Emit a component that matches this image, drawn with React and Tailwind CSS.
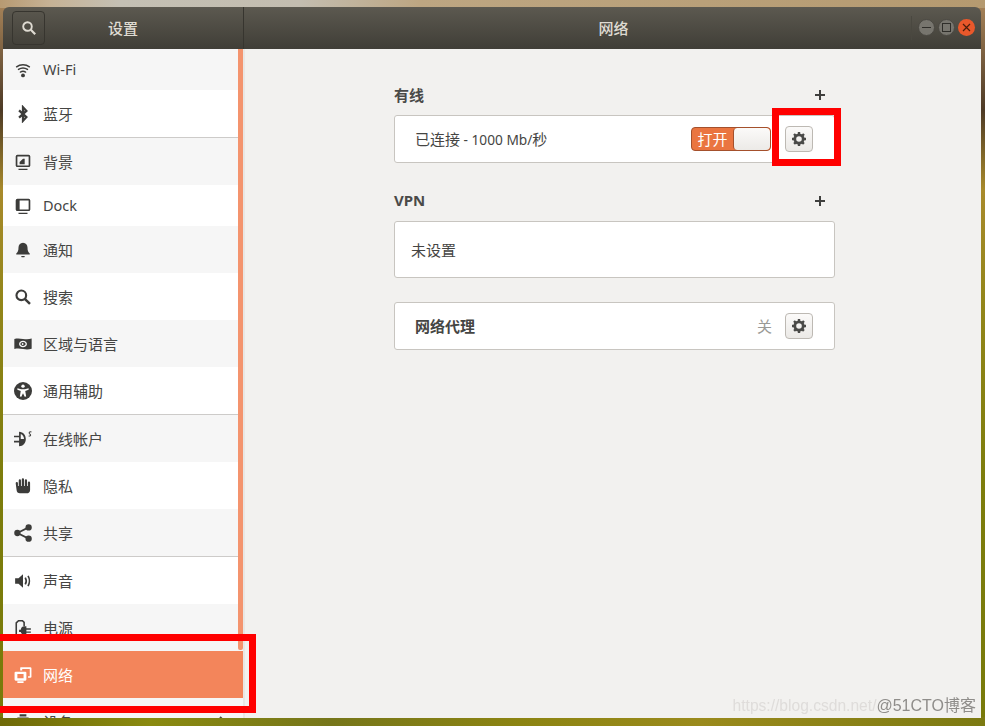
import React from "react";

const I = ({ children, fill = "currentColor" }) => (
  <svg width="18" height="18" viewBox="0 0 16 16" fill={fill} className="shrink-0">{children}</svg>
);

const icons = {
  wifi: (
    <I fill="none">
      <g stroke="currentColor" strokeWidth="1.300" strokeLinecap="round">
        <path d="M2.300 5.200C5.500 2.800 10.500 2.800 13.700 5.200" />
        <path d="M4 7.500C6.400 5.900 9.600 5.900 12 7.500" />
        <path d="M5.700 9.800C7 9 9 9 10.300 9.800" />
      </g>
      <circle cx="8" cy="12.800" r="1.700" fill="currentColor" />
    </I>
  ),
  bt: (
    <I fill="none">
      <path d="M4.500 4.800 11 10.800 8 14V2l3 3.200-6.500 6" stroke="currentColor" strokeWidth="2" />
    </I>
  ),
  bg: (
    <I>
      <path fillRule="evenodd" d="M3 1.500h10A1.500 1.500 0 0 1 14.500 3v8a1.500 1.500 0 0 1-1.500 1.500H3A1.500 1.500 0 0 1 1.500 11V3A1.500 1.500 0 0 1 3 1.500ZM3 3v8h10V3ZM4 14h8v1.200H4Z" />
      <path d="M5 10V8l3-3h1.500v5Z" />
    </I>
  ),
  dock: (
    <I>
      <path fillRule="evenodd" d="M3 1.500h10A1.500 1.500 0 0 1 14.500 3v8a1.500 1.500 0 0 1-1.500 1.500H3A1.500 1.500 0 0 1 1.500 11V3A1.500 1.500 0 0 1 3 1.500ZM5 3v8h8V3ZM4 14h8v1.200H4Z" />
    </I>
  ),
  bell: (
    <I>
      <path d="M8 1.500c-2.600 0-4 2-4 4.200 0 3-.7 4.300-2 5.300v1h12v-1c-1.300-1-2-2.300-2-5.300C12 3.500 10.600 1.500 8 1.500ZM6.500 13.300h3v.4c0 .5-.7 .8-1.500 .8s-1.500-.3-1.500-.8Z" />
    </I>
  ),
  search: (
    <I fill="none">
      <circle cx="6.500" cy="6.500" r="4.300" stroke="currentColor" strokeWidth="1.900" />
      <path d="m9.800 9.800 4.400 4.400" stroke="currentColor" strokeWidth="2.200" />
    </I>
  ),
  region: (
    <I>
      <path fillRule="evenodd" d="M.3 3.500C3 2.800 5 3 8 3.500s5 .5 7.700-.3v9c-2.700 .8-4.700 .8-7.700 .3s-5-.7-7.700 0ZM8 5.200c-2 0-3.500 1.300-3.500 2.800S6 10.800 8 10.800 11.500 9.500 11.500 8 10 5.200 8 5.200Zm0 1.100c1.300 0 2.300 .8 2.300 1.700S9.300 9.700 8 9.700 5.700 8.900 5.700 8 6.700 6.300 8 6.300Zm0 1a.8 .8 0 1 0 0 1.500.8 .8 0 0 0 0-1.500Z" />
    </I>
  ),
  access: (
    <svg width="18" height="18" viewBox="0 0 16 16" className="shrink-0">
      <circle cx="8" cy="8" r="8" fill="currentColor" />
      <circle cx="8" cy="3.700" r="1.500" fill="#fff" />
      <path d="M3 5.600 6.300 6.500h3.400L13 5.600v1.300l-3 1 .8 5-1.300.3L8 10l-1.500 3.200-1.300-.3.800-5-3-1Z" fill="#fff" />
    </svg>
  ),
  online: (
    <I>
      <path d="M4.500 1.500c3.800 .2 6 3 6 6.500s-2.200 6.300-6 6.500ZM0 5h4.500v1.500H0ZM0 9.500h4.500V11H0Z" />
      <path d="M6 3.500c1.800 .7 2.900 2.400 2.900 4.500H6Z" fill="#f6f6f6" />
      <path d="M15.500 1.800c-1.200-.5-2.200 .1-2 1 .2 .8 1.400 1 1.300 1.900-.1 .7-1 .9-1.800 .5" fill="none" stroke="currentColor" strokeWidth=".9" />
    </I>
  ),
  hand: (
    <I>
      <path d="M1.500 5.500a1 1 0 0 1 2 0V8h.7V3a1 1 0 0 1 2 0v5h.7V2.200a1 1 0 0 1 2 0V8h.7V3a1 1 0 0 1 2 0v5h.7V5a1 1 0 0 1 2 0v6.500c0 1.800-1.400 3-3 3h-6c-1.700 0-3-1.300-3-3Z" />
    </I>
  ),
  share: (
    <I>
      <circle cx="3" cy="8" r="2.800" />
      <circle cx="13" cy="3" r="2.800" />
      <circle cx="13" cy="13" r="2.800" />
      <path d="m3 8 10-5M3 8l10 5" stroke="currentColor" strokeWidth="1.500" />
    </I>
  ),
  sound: (
    <I>
      <path d="M1 5.500h3L8 2v12l-4-3.500H1Z" />
      <path d="M10 5c1 1.700 1 4.300 0 6M12.500 3.500c1.500 2.500 1.500 6.500 0 9" fill="none" stroke="currentColor" strokeWidth="1.500" />
    </I>
  ),
  power: (
    <I>
      <path d="M2 14.500V3.500L4 1.500h3.500L9 3v3.500" fill="none" stroke="currentColor" strokeWidth="1.400" />
      <path d="M2 14h5v1.300H2Z" />
      <path d="M6 9.500a3.500 3.500 0 0 1 3.500-3H11v1.800h4v1.300h-4v1.400h4v1.300h-4V14H9.500A3.500 3.500 0 0 1 6 11.500H4.500v-2Z" />
    </I>
  ),
  net: (
    <I>
      <path fillRule="evenodd" d="M1.500 5h8.500a1 1 0 0 1 1 1v6a1 1 0 0 1-1 1H1.500a1 1 0 0 1-1-1V6a1 1 0 0 1 1-1Zm1.500 2v3.800h5.500V7ZM3 13.500h5.500V15H3Z" />
      <path d="M6 1h8.500a1 1 0 0 1 1 1v7.500a1 1 0 0 1-1 1h-2V9h1.500V2.700H7.300V4H5.500V1.500A.5 .5 0 0 1 6 1Z" />
    </I>
  ),
  device: (
    <I>
      <path fillRule="evenodd" d="M5 1h6v2H5ZM3 4h10v11H3Zm2 2v7h6V6Z" />
    </I>
  ),
};

const rows = [
  ["wifi", "Wi-Fi", "h-[41px]", "bg-[#f6f6f6]"],
  ["bt", "蓝牙", "h-[47px]", "bg-white"],
  ["bg", "背景", "h-[48px] border-t border-[#cdcbc9]", "bg-[#f6f6f6]"],
  ["dock", "Dock", "h-[41px]", "bg-white"],
  ["bell", "通知", "h-[47px]", "bg-[#f6f6f6]"],
  ["search", "搜索", "h-[47px]", "bg-white"],
  ["region", "区域与语言", "h-[47px]", "bg-[#f6f6f6]"],
  ["access", "通用辅助", "h-[47px]", "bg-white"],
  ["online", "在线帐户", "h-[48px] border-t border-[#cdcbc9]", "bg-[#f6f6f6]"],
  ["hand", "隐私", "h-[47px]", "bg-white"],
  ["share", "共享", "h-[47px]", "bg-[#f6f6f6]"],
  ["sound", "声音", "h-[48px] border-t border-[#cdcbc9]", "bg-white"],
  ["power", "电源", "h-[47px]", "bg-[#f6f6f6]"],
  ["net", "网络", "h-[47px]", "bg-[#f3855b]"],
  ["device", "设备", "h-[47px]", "bg-[#f6f6f6]"],
];

const Gear = () => (
  <button className="flex h-[26px] w-[28px] items-center justify-center rounded-[4px] border border-[#bdb9b3] bg-gradient-to-b from-[#fbfaf9] to-[#ebe9e6] text-[#4a4a48]">
    <svg width="16" height="16" viewBox="0 0 16 16" fill="none">
      <circle cx="8" cy="8" r="4.200" stroke="currentColor" strokeWidth="2.800" />
      <path d="M8 1v14M1 8h14M3 3l10 10M13 3 3 13" stroke="currentColor" strokeWidth="2.400" strokeDasharray="2.600 8.800" />
    </svg>
  </button>
);

const Plus = () => (
  <svg width="12" height="12" viewBox="0 0 12 12" className="text-[#3f3f3d]">
    <path d="M6 1v10M1 6h10" stroke="currentColor" strokeWidth="2" />
  </svg>
);

export default function App() {
  return (
    <div
      className="relative h-[726px] w-[985px] overflow-hidden bg-[linear-gradient(90deg,#b79a72_0px,#c6b295_50px,#c4c0b4_120px,#c3bdb0_300px,#bda682_420px,#b59a70_985px),linear-gradient(90deg,#6f6a08_0px,#8a8a10_150px,#76761a_330px,#8c8412_520px,#9a8a1c_700px,#7c7a12_985px),linear-gradient(180deg,#a9855a_0px,#4d3a26_110px,#a88a2b_190px,#93861a_300px,#7d7d0c_480px,#787a0a_726px)] bg-[length:100%_8px,100%_9px,100%_100%] bg-[position:top,bottom,center] bg-no-repeat pb-[8px] pl-[3px] pr-[4px] pt-[7px]"
      style={{ fontFamily: '"Noto Sans", "Noto Sans CJK SC", sans-serif' }}
    >
      <div className="flex h-[711px] flex-col overflow-hidden rounded-t-[6px]">
        <header className="flex h-[42px] shrink-0 bg-gradient-to-b from-[#5c5950] to-[#403e37] text-[#dfdbd2]">
          <div className="relative flex w-[241px] items-center justify-center border-r border-[#37352f] pt-px">
            <button className="absolute left-[9px] top-[4px] flex h-[34px] w-[33px] items-center justify-center rounded-[4px] border border-[#37352f]">
              <svg width="16" height="16" viewBox="0 0 16 16" fill="none">
                <circle cx="6.500" cy="6.500" r="4.300" stroke="currentColor" strokeWidth="1.900" />
                <path d="m9.800 9.800 4.400 4.400" stroke="currentColor" strokeWidth="2.200" />
              </svg>
            </button>
            <span className="text-[15px] font-medium">设置</span>
          </div>
          <div className="relative flex flex-1 items-center justify-center pl-[2px] pt-px">
            <span className="text-[15px] font-medium">网络</span>
            <div className="absolute right-[6px] top-[12px] flex items-center gap-[3px]">
              <div className="absolute left-[-7px] top-[-3px] h-[24px] w-px bg-[#4a4840]" />
              {[0, 1].map((k) => (
                <div key={k} className="flex h-[17px] w-[17px] items-center justify-center rounded-full border border-[#4a4842] bg-[#77756e] text-[#2f2e2a]">
                  <svg width="9" height="9" viewBox="0 0 9 9" fill="none">
                    {k === 0 ? <path d="M0 4.500h9" stroke="currentColor" strokeWidth="1" /> : <rect x=".5" y=".5" width="8" height="8" stroke="currentColor" />}
                  </svg>
                </div>
              ))}
              <div className="flex h-[17px] w-[17px] items-center justify-center rounded-full bg-[#e9582b] text-[#4a1d0a]">
                <svg width="9" height="9" viewBox="0 0 9 9" fill="none">
                  <path d="m1 1 7 7M8 1 1 8" stroke="currentColor" strokeWidth="1.200" />
                </svg>
              </div>
            </div>
          </div>
        </header>

        <div className="flex min-h-0 flex-1">
          <aside className="relative w-[240px] shrink-0 overflow-hidden">
            {rows.map(([icon, label, size, bg]) => (
              <div
                key={label}
                className={`box-border flex items-center gap-[11px] pl-[11px] ${size} ${bg} ${icon === "net" ? "text-white" : "text-[#454543]"}`}
              >
                <span className={`flex w-[18px] justify-center ${icon === "net" ? "text-white" : "text-[#3c3c3a]"}`}>{icons[icon]}</span>
                <span className={icon === "wifi" || icon === "dock" ? "text-[14.500px]" : "pt-px text-[15px]"}>{label}</span>
                {icon === "device" && (
                  <svg width="8" height="12" viewBox="0 0 8 12" fill="none" className="ml-auto mr-[16px]">
                    <path d="m1 1 5 5-5 5" stroke="currentColor" strokeWidth="2" />
                  </svg>
                )}
              </div>
            ))}
            <div className="absolute right-0 top-0 h-[601px] w-[5px] rounded-b-[2px] bg-[#f4946e]" />
          </aside>
          <div className="w-[2px] shrink-0 bg-[#e9e7e4]" />

          <main className="flex-1 bg-[#f2f1ef] pl-[149px] pt-[36px] text-[#454543]">
            <div className="w-[441px]">
              <div className="flex h-[20px] items-center justify-between pr-[9px]">
                <span className="pt-px text-[15px] font-bold text-[#4a4a48]">有线</span>
                <Plus />
              </div>
              <div className="mt-[10px] flex h-[48px] items-center rounded-[3px] border border-[#c8c5c0] bg-white pl-[20px] pr-[21px] text-[15px]">
                <span className="pt-px">已连接<span className="text-[13.700px]"> - 1000 Mb/</span>秒</span>
                <div className="ml-auto mr-[14px] flex h-[24px] w-[80px] overflow-hidden rounded-[4px] border border-[#a4502c] bg-[#ea7540]">
                  <span className="flex w-[41px] items-center justify-center text-[15px] text-white">打开</span>
                  <span className="flex-1 rounded-[4px] border-l border-[#a4502c] bg-gradient-to-b from-[#fbfaf9] to-[#eceae7]" />
                </div>
                <Gear />
              </div>

              <div className="mt-[28px] flex h-[20px] items-center justify-between pr-[9px]">
                <span className="pb-[2px] text-[15px] font-bold text-[#4a4a48]">VPN</span>
                <Plus />
              </div>
              <div className="mt-[10px] flex h-[57px] items-center rounded-[3px] border border-[#c8c5c0] bg-white pl-[16px] pt-px text-[15px]">
                未设置
              </div>

              <div className="mt-[24px] flex h-[48px] items-center rounded-[3px] border border-[#c8c5c0] bg-white pl-[20px] pr-[21px]">
                <span className="pt-px text-[15px] font-bold">网络代理</span>
                <span className="ml-auto mr-[13px] text-[15px] text-[#9a9a96]">关</span>
                <Gear />
              </div>
            </div>
          </main>
        </div>
      </div>

      <div className="absolute left-[772px] top-[108px] h-[58px] w-[69px] border-[7px] border-[#ff0000]" />
      <div className="absolute left-[-10px] top-[634px] h-[79px] w-[266px] border-[7px] border-[#ff0000]" />
      <div className="absolute right-[9px] top-[696px] whitespace-nowrap text-[15.600px] leading-[20px] text-[#d9d7d4]/80 blur-[0.4px]" style={{ fontFamily: '"Liberation Sans", "Noto Sans CJK SC", sans-serif' }}>
        https://blog.csdn.net/<span className="text-[16px] text-[#8f8d8a]">@51CTO博客</span>
      </div>
    </div>
  );
}
